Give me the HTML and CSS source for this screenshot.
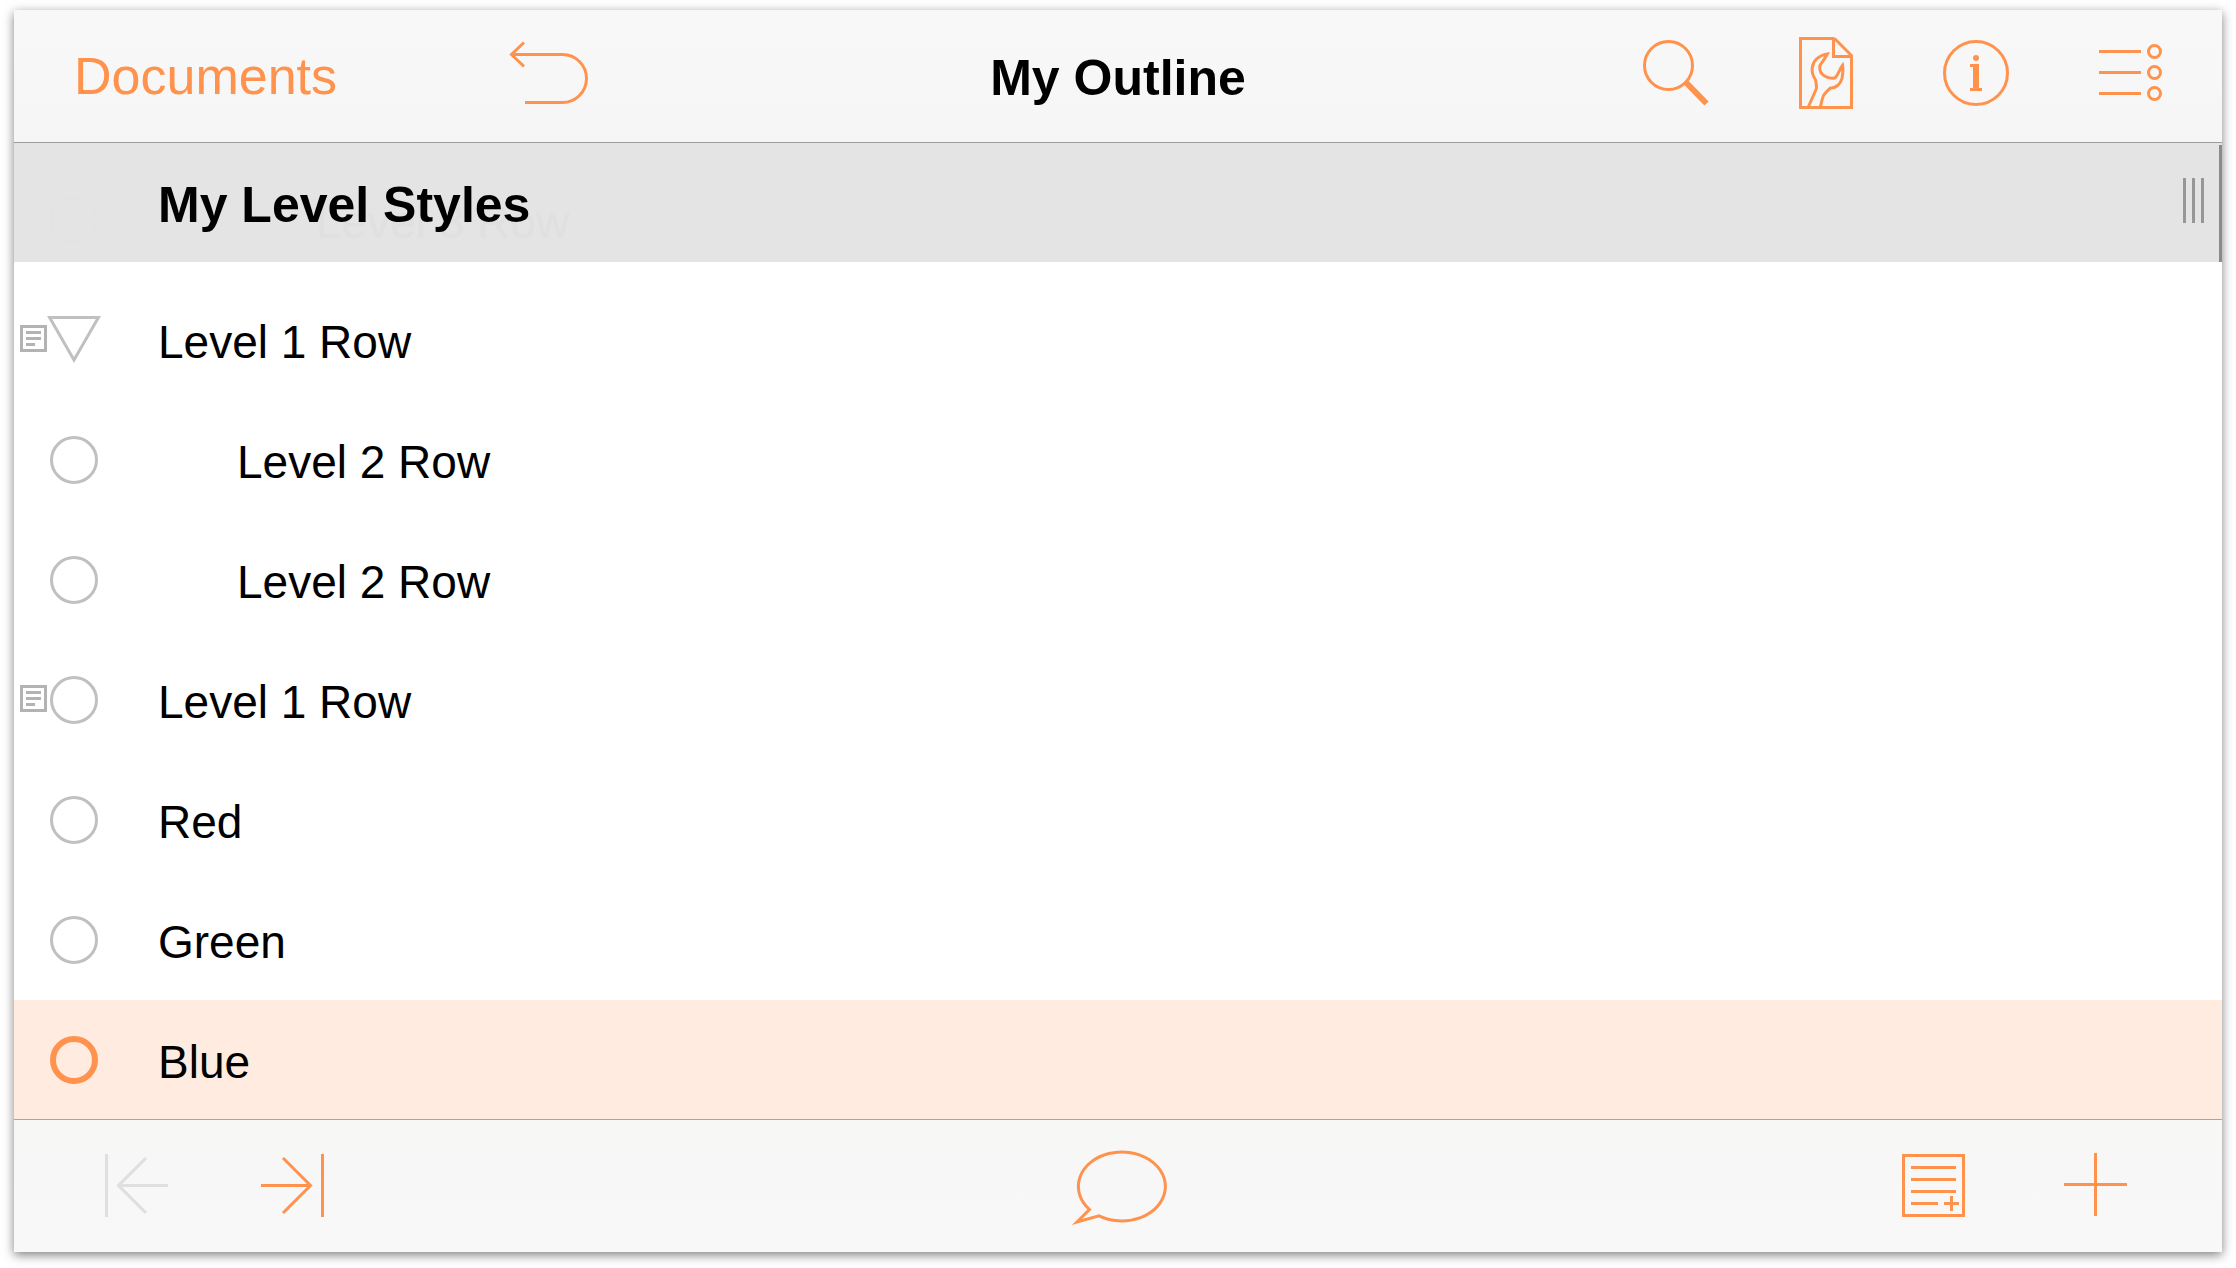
FILE: index.html
```html
<!DOCTYPE html>
<html lang="en">

<head>
    <meta charset="UTF-8">
    <meta name="viewport" content="width=device-width, initial-scale=1.0">
    <title>My Outline</title>
    <link rel="stylesheet" href="styles.css">
</head>

<body>

    <div class="window">
        <!-- Top bar -->
        <header class="topbar">
            <div class="topbar-left">
                <a class="back-link" href="#">Documents</a>
                <button class="icon-btn" aria-label="Undo">
                    <svg width="84" height="72" viewBox="0 0 84 72">
                        <path d="M17 5.5L4.5 17.5L17 29.5M4.5 17.5H55.5a24 24 0 0 1 0 48H18" />
                    </svg>
                </button>
            </div>
            <h1 class="title">My Outline</h1>
            <div class="topbar-right">
                <button class="icon-btn" aria-label="Search">
                    <svg width="72" height="72" viewBox="0 0 72 72">
                        <circle cx="28.5" cy="28.5" r="24" />
                        <path class="thick" d="M45.5 45L66.5 66.5" />
                    </svg>
                </button>
                <button class="icon-btn" aria-label="Document settings">
                    <svg width="72" height="72" viewBox="0 0 72 72">
                        <path d="M44.5 1.5H10.5V70.5H61.5V18.5L44.5 1.5M43.5 1.5V19.5H61.5" />
                        <path d="M18.3 70L26 52.5Q26.8 50.5 26.3 48Q26.3 44.5 25.3 42.5C22.6 38.5 21.8 35.5 22.2 31C23 24 28.5 18.5 37.3 17C35 22 31.5 25.5 29.8 28.7C29.2 34 31.5 37.3 34.5 39C38 41 42 41.6 45.3 40.7C48.5 37 50 31.5 52.6 28.3C53.4 33 52.8 37 52 41.3C50 48.5 46 50.8 40 51.3C37.5 53.5 35 56 33.5 58.5C32 62 31.5 66 30.3 70" />
                    </svg>
                </button>
                <button class="icon-btn" aria-label="Info">
                    <svg width="72" height="72" viewBox="0 0 72 72">
                        <circle cx="36" cy="36" r="31.5" />
                        <circle class="solid" cx="36" cy="21" r="3" />
                        <path class="solid" d="M30 27h9v24h3v3H30v-3h3V30h-3z" />
                    </svg>
                </button>
                <button class="icon-btn" aria-label="Contents">
                    <svg width="72" height="72" viewBox="0 0 72 72">
                        <path d="M9 14.5H51M9 35.5H51M9 56.5H51" />
                        <circle cx="64.5" cy="14.5" r="6" />
                        <circle cx="64.5" cy="35.5" r="6" />
                        <circle cx="64.5" cy="56.5" r="6" />
                    </svg>
                </button>
            </div>
        </header>

        <!-- Column heading, with the scrolled row showing through -->
        <div class="section">
            <div class="ghost-row" aria-hidden="true">
                <svg class="handle" width="54" height="48" viewBox="0 0 54 48">
                    <circle cx="27" cy="24" r="22.5" />
                </svg>
                <span class="text level-3">Level 3 Row</span>
            </div>
            <h2 class="section-title">My Level Styles</h2>
            <button class="grip" aria-label="Resize column">
                <span class="grip-bar"></span>
                <span class="grip-bar"></span>
                <span class="grip-bar"></span>
            </button>
            <div class="scroll-edge"></div>
        </div>

        <!-- Outline rows -->
        <ul class="rows">
            <li class="row">
                <button class="note-btn" aria-label="Show note">
                    <svg width="27" height="27" viewBox="0 0 27 27">
                        <path d="M1.5 1.5H25.5V25.5H1.5ZM6 7.5H21M6 13.5H21M6 19.5H15" />
                    </svg>
                </button>
                <button class="handle" aria-label="Collapse">
                    <svg width="54" height="48" viewBox="0 0 54 48">
                        <path d="M2.6 1.5H51.4L27 44Z" />
                    </svg>
                </button>
                <span class="text">Level 1 Row</span>
            </li>
            <li class="row">
                <button class="handle" aria-label="Select row">
                    <svg width="54" height="48" viewBox="0 0 54 48">
                        <circle cx="27" cy="24" r="22.5" />
                    </svg>
                </button>
                <span class="text level-2">Level 2 Row</span>
            </li>
            <li class="row">
                <button class="handle" aria-label="Select row">
                    <svg width="54" height="48" viewBox="0 0 54 48">
                        <circle cx="27" cy="24" r="22.5" />
                    </svg>
                </button>
                <span class="text level-2">Level 2 Row</span>
            </li>
            <li class="row">
                <button class="note-btn" aria-label="Show note">
                    <svg width="27" height="27" viewBox="0 0 27 27">
                        <path d="M1.5 1.5H25.5V25.5H1.5ZM6 7.5H21M6 13.5H21M6 19.5H15" />
                    </svg>
                </button>
                <button class="handle" aria-label="Select row">
                    <svg width="54" height="48" viewBox="0 0 54 48">
                        <circle cx="27" cy="24" r="22.5" />
                    </svg>
                </button>
                <span class="text">Level 1 Row</span>
            </li>
            <li class="row">
                <button class="handle" aria-label="Select row">
                    <svg width="54" height="48" viewBox="0 0 54 48">
                        <circle cx="27" cy="24" r="22.5" />
                    </svg>
                </button>
                <span class="text">Red</span>
            </li>
            <li class="row">
                <button class="handle" aria-label="Select row">
                    <svg width="54" height="48" viewBox="0 0 54 48">
                        <circle cx="27" cy="24" r="22.5" />
                    </svg>
                </button>
                <span class="text">Green</span>
            </li>
            <li class="row selected">
                <button class="handle" aria-label="Select row">
                    <svg width="54" height="48" viewBox="0 0 54 48">
                        <circle cx="27" cy="24" r="21" />
                    </svg>
                </button>
                <span class="text">Blue</span>
            </li>
        </ul>

        <!-- Bottom bar -->
        <footer class="bottombar">
            <div class="bottombar-left">
                <button class="icon-btn" aria-label="Outdent" disabled>
                    <svg width="63" height="63" viewBox="0 0 63 63">
                        <path d="M1.5 0V63M14 31.5H63M41 4L13.5 31.5L41 59" />
                    </svg>
                </button>
                <button class="icon-btn" aria-label="Indent">
                    <svg width="63" height="63" viewBox="0 0 63 63">
                        <path d="M61.5 0V63M0 31.5H49M22 4L49.5 31.5L22 59" />
                    </svg>
                </button>
            </div>
            <button class="icon-btn" aria-label="Comment">
                <svg width="102" height="81" viewBox="-4 -1 102 81">
                    <path d="M30 69.8A43.5 34.5 0 1 0 20.5 63.5L8 76Z" />
                </svg>
            </button>
            <div class="bottombar-right">
                <button class="icon-btn" aria-label="Add note">
                    <svg width="63" height="63" viewBox="0 0 63 63">
                        <path d="M1.5 1.5H61.5V61.5H1.5ZM9 13.5H54M9 25.5H54M9 37.5H54M9 49.5H36M42 49.5H57M49.5 42V57" />
                    </svg>
                </button>
                <button class="icon-btn" aria-label="Add row">
                    <svg width="63" height="63" viewBox="0 0 63 63">
                        <path d="M0 30.5H63M31.5 -1V62" />
                    </svg>
                </button>
            </div>
        </footer>
    </div>

</body>

</html>
```
FILE: styles.css
```css
* {
    box-sizing: border-box;
}

body {
    font-family: "Liberation Sans", Arial, sans-serif;
    background-color: #fff;
    color: #000;
    margin: 0;
    padding: 10px 14px 16px;
    min-height: 100vh;
    display: flex;
}

h1,
h2,
ul {
    margin: 0;
    padding: 0;
}

button {
    padding: 0;
    border: none;
    background: none;
    cursor: pointer;
}

svg {
    display: block;
    overflow: visible;
    fill: none;
    stroke: currentColor;
    stroke-width: 3;
}

.solid {
    fill: currentColor;
    stroke: none;
}

.thick {
    stroke-width: 6;
}

.window {
    flex: 1;
    display: flex;
    flex-direction: column;
    background-color: #fff;
    box-shadow: 0 3px 10px rgba(0, 0, 0, 0.5);
}

/* top bar */
.topbar {
    display: grid;
    grid-template-columns: 1fr auto 1fr;
    align-items: center;
    height: 133px;
    padding: 0 60px;
    background: linear-gradient(#f8f8f8, #f6f6f6);
    border-bottom: 1px solid #9b9b9b;
}

.topbar-left,
.topbar-right {
    display: flex;
    align-items: center;
}

.topbar-left {
    gap: 170px;
}

.topbar-right {
    justify-content: flex-end;
    gap: 78px;
}

.topbar .icon-btn {
    padding-bottom: 6px;
}

.back-link {
    font-size: 52px;
    color: #ff924d;
    text-decoration: none;
}

.title {
    font-size: 50px;
    padding-top: 4px;
}

.icon-btn {
    color: #ff924d;
}

.icon-btn:disabled {
    color: #dfdfdf;
    cursor: default;
}

/* section heading */
.section {
    position: relative;
    display: flex;
    align-items: center;
    justify-content: space-between;
    height: 119px;
    padding: 0 18px 0 144px;
    background-color: #e4e4e4;
}

.section-title {
    position: relative;
    font-size: 50px;
    padding-top: 4px;
}

.ghost-row {
    position: absolute;
    left: 33px;
    bottom: 0;
    display: flex;
    align-items: center;
    height: 84px;
    color: #e0e0e0;
}

.ghost-row .handle {
    color: #e3e3e3;
}

.grip {
    display: flex;
    gap: 6px;
    padding-bottom: 4px;
}

.grip-bar {
    width: 3px;
    height: 45px;
    background-color: #979797;
}

.scroll-edge {
    position: absolute;
    top: 2px;
    right: 0;
    bottom: 0;
    width: 3px;
    background-color: #8a8a8a;
}

/* rows */
.rows {
    flex: 1;
    padding-top: 18px;
    list-style: none;
}

.row {
    display: grid;
    grid-template-columns: 33px 54px 1fr;
    align-items: center;
    height: 120px;
}

.note-btn {
    grid-column: 1;
    padding: 0 0 3px 6px;
    color: #b3b3b3;
}

.handle {
    grid-column: 2;
    color: #c0c0c0;
}

.text {
    font-size: 46px;
    padding-top: 3px;
    padding-left: 57px;
}

.level-2 {
    padding-left: 136px;
}

.level-3 {
    padding-left: 215px;
}

.selected {
    background-color: #ffebe0;
}

.selected .handle {
    color: #ff924d;
}

.selected svg {
    stroke-width: 6;
}

/* bottom bar */
.bottombar {
    display: grid;
    grid-template-columns: 1fr auto 1fr;
    align-items: center;
    position: relative;
    height: 133px;
    margin-top: -1px;
    padding: 0 95px 0 91px;
    background: linear-gradient(#f8f7f5, #f7f7f7 30%, #f8f8f8);
    border-top: 1px solid #b1a19a;
}

.bottombar-left,
.bottombar-right {
    display: flex;
}

.bottombar-left {
    gap: 93px;
}

.bottombar-right {
    justify-content: flex-end;
    gap: 99px;
}

.bottombar .icon-btn {
    padding-bottom: 1px;
}
```
